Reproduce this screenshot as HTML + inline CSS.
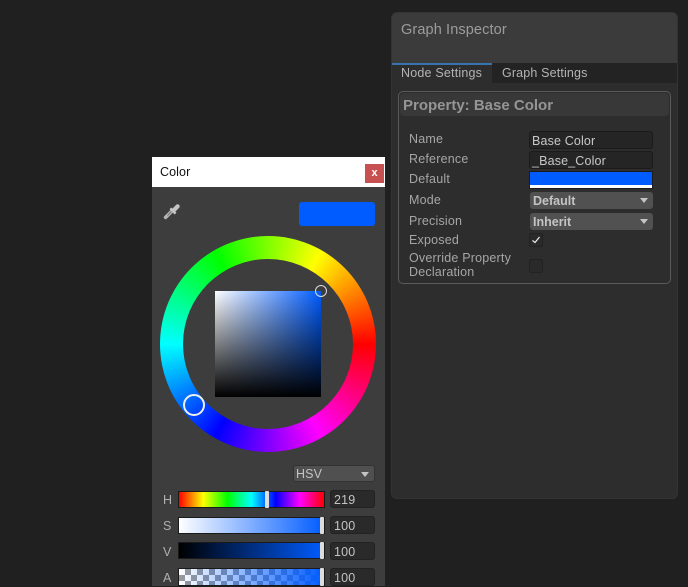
<!DOCTYPE html>
<html><head><meta charset="utf-8"><style>
*{box-sizing:border-box;margin:0;padding:0}
html,body{width:688px;height:586px;overflow:hidden;background:#202020;font-family:"Liberation Sans",sans-serif}
.a{position:absolute;white-space:nowrap}
.l{position:absolute;left:409px;font-size:12.5px;color:#a6a6a6;letter-spacing:.2px;line-height:14px;white-space:nowrap}
.i{position:absolute;left:529px;width:124px;height:18px;background:#252525;border:1px solid #1b1b1b;border-radius:3px;font-size:12.5px;color:#c8c8c8;padding-left:2px;line-height:18px;letter-spacing:.15px}
.s{position:absolute;left:530px;width:123px;height:17px;background:#515151;border-radius:3px;font-size:12.5px;font-weight:bold;color:#c4c4c4;padding-left:3px;line-height:18px;letter-spacing:0}
.s:after,.d:after{content:"";position:absolute;right:5px;top:6px;border:4.5px solid transparent;border-top:5px solid #c4c4c4;border-bottom:0}
.c{position:absolute;left:529px;width:14px;height:14px;background:#2a2a2a;border:1px solid #222;border-radius:2px}
.sl{position:absolute;left:178px;width:147px;height:17px;border:1px solid #1a1a1a}
.h{position:absolute;width:4px;background:#ddd;border-radius:1px}
.n{position:absolute;left:330px;width:45px;height:18px;background:#2a2a2a;border:1px solid #222;border-radius:3px;color:#c4c4c4;font-size:12.5px;line-height:18px;padding-left:3px;letter-spacing:.2px}
.k{position:absolute;left:163px;font-size:12.5px;color:#b0b0b0;line-height:14px}
</style></head><body>

<!-- Graph Inspector -->
<div class="a" style="left:391px;top:12px;width:287px;height:487px;background:#2d2d2d;border:1px solid #333;border-radius:6px;overflow:hidden">
 <div class="a" style="left:0;top:0;width:287px;height:50px;background:#3b3b3b"></div>
 <div class="a" style="left:9px;top:9px;font-size:14.5px;letter-spacing:.12px;color:#9c9c9c;line-height:17px">Graph Inspector</div>
 <div class="a" style="left:0;top:50px;width:287px;height:20px;background:#232323"></div>
 <div class="a" style="left:0;top:50px;width:100px;height:20px;background:#2d2d2d;border-top:2px solid #3a72b0"></div>
 <div class="a" style="left:9px;top:53px;font-size:12.5px;letter-spacing:.2px;color:#b4b4b4;line-height:15px">Node Settings</div>
 <div class="a" style="left:110px;top:53px;font-size:12.5px;letter-spacing:.15px;color:#b4b4b4;line-height:15px">Graph Settings</div>
</div>
<div class="a" style="left:398px;top:91px;width:273px;height:193px;border:1px solid #5a5a5a;border-radius:5px"></div>
<div class="a" style="left:400px;top:93px;width:269px;height:23px;background:#383838;border-radius:4px"></div>
<div class="a" style="left:403px;top:97px;font-size:15px;font-weight:bold;color:#959595;line-height:18px">Property: Base Color</div>

<div class="l" style="top:132px">Name</div>
<div class="l" style="top:152px">Reference</div>
<div class="l" style="top:172px">Default</div>
<div class="l" style="top:193px">Mode</div>
<div class="l" style="top:214px">Precision</div>
<div class="l" style="top:233px">Exposed</div>
<div class="l" style="top:251px">Override Property</div>
<div class="l" style="top:265px">Declaration</div>

<div class="i" style="top:131px">Base Color</div>
<div class="i" style="top:151px">_Base_Color</div>
<div class="a" style="left:529px;top:171px;width:124px;height:18px;background:#fff;border:1px solid #1b1b1b"><div style="height:13px;background:#005cff"></div></div>
<div class="s" style="top:192px">Default</div>
<div class="s" style="top:213px">Inherit</div>
<div class="c" style="top:233px"><svg width="12" height="12" style="display:block"><path d="M2.5 6.5L5 8.5L9.5 3" fill="none" stroke="#e8e8e8" stroke-width="1.3"/></svg></div>
<div class="c" style="top:259px"></div>

<!-- Color window -->
<div class="a" style="left:152px;top:157px;width:233px;height:429px;background:#3d3d3d"></div>
<div class="a" style="left:152px;top:157px;width:233px;height:30px;background:#fff"></div>
<div class="a" style="left:160px;top:165px;font-size:12.5px;color:#111;line-height:15px;letter-spacing:.1px">Color</div>
<div class="a" style="left:365px;top:164px;width:19px;height:19px;background:#c75050;color:#fff;font-size:11px;font-weight:bold;line-height:18px;text-align:center">x</div>

<svg class="a" style="left:163px;top:203px" width="18" height="18" viewBox="0 0 18 18">
 <path d="M2.6 14.4L9 8" stroke="#b4b4b4" stroke-width="3.6" fill="none" stroke-linecap="round"/>
 <path d="M4.5 12.5L9 8" stroke="#7a7a7a" stroke-width="1.2" fill="none"/>
 <path d="M7.4 5.4L12.6 10.6" stroke="#c8c8c8" stroke-width="2.4" fill="none"/>
 <path d="M10.5 7.5L14.6 3.4" stroke="#c4c4c4" stroke-width="4.2" fill="none" stroke-linecap="round"/>
</svg>
<div class="a" style="left:299px;top:202px;width:76px;height:24px;background:#005cff;border-radius:3px"></div>

<div class="a" style="left:160px;top:236px;width:216px;height:216px;border-radius:50%;background:conic-gradient(from 90deg,#f00,#f0f,#00f,#0ff,#0f0,#ff0,#f00)"></div>
<div class="a" style="left:183px;top:259px;width:170px;height:170px;border-radius:50%;background:#3d3d3d"></div>
<div class="a" style="left:215px;top:291px;width:106px;height:106px;background:linear-gradient(to bottom,rgba(0,0,0,0),#000),linear-gradient(to right,#fff,#005cff)"></div>
<div class="a" style="left:315px;top:285px;width:12px;height:12px;border-radius:50%;border:1px solid #ddd"></div>
<div class="a" style="left:183px;top:394px;width:22px;height:22px;border-radius:50%;border:2px solid #f0f0f0"></div>

<div class="d a" style="left:293px;top:465px;width:82px;height:17px;background:#505050;border:1px solid #333;border-radius:3px;font-size:12.5px;color:#c4c4c4;line-height:16px;padding-left:2px;letter-spacing:.1px">HSV</div>

<div class="k" style="top:493px">H</div>
<div class="k" style="top:519px">S</div>
<div class="k" style="top:545px">V</div>
<div class="k" style="top:571px">A</div>

<div class="sl" style="top:491px;background:linear-gradient(to right,#f00,#ff0,#0f0,#0ff,#00f,#f0f,#f00)"></div>
<div class="h" style="left:265px;top:491px;height:17px"></div>
<div class="sl" style="top:517px;background:linear-gradient(to right,#fff,#005cff)"></div>
<div class="h" style="left:320px;top:517px;height:17px"></div>
<div class="sl" style="top:542px;background:linear-gradient(to right,#000,#005cff)"></div>
<div class="h" style="left:320px;top:542px;height:17px"></div>
<div class="sl" style="top:568px;height:18px;background:linear-gradient(to right,rgba(0,92,255,0),#005cff),repeating-conic-gradient(#999 0 25%,#fff 0 50%) 0 0/12px 12px"></div>
<div class="h" style="left:320px;top:568px;height:18px"></div>

<div class="n" style="top:490px">219</div>
<div class="n" style="top:516px">100</div>
<div class="n" style="top:542px">100</div>
<div class="n" style="top:568px">100</div>
</body></html>
